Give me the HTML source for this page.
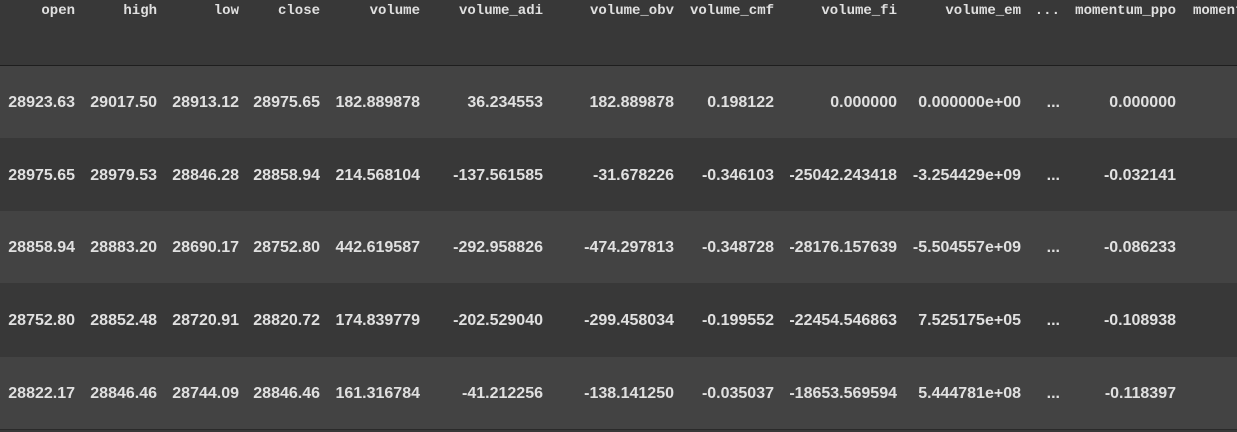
<!DOCTYPE html><html><head><style>
body{margin:0;width:1237px;height:432px;overflow:hidden;background:#383838;position:relative;color:#e0e0e0}
.h{position:absolute;top:3px;font:bold 14px "Liberation Mono",monospace;white-space:nowrap;text-align:right}
.r{position:absolute;left:0;width:1237px;height:72px}
.c{position:absolute;font:bold 16px "Liberation Sans",sans-serif;white-space:nowrap;top:28px;text-align:right}
.line{position:absolute;left:0;width:1237px;height:1px;background:#1e1e1e}
</style></head><body>
<div class="line" style="top:65px"></div>
<div id="hd"></div>
<div id="rows"></div>
<script>
var R=[75,157,239,320,420,543,674,774,897,1021,1060,1176];
var H=["open","high","low","close","volume","volume_adi","volume_obv","volume_cmf","volume_fi","volume_em","...","momentum_ppo"];
var D=[["28923.63","29017.50","28913.12","28975.65","182.889878","36.234553","182.889878","0.198122","0.000000","0.000000e+00","...","0.000000"],
["28975.65","28979.53","28846.28","28858.94","214.568104","-137.561585","-31.678226","-0.346103","-25042.243418","-3.254429e+09","...","-0.032141"],
["28858.94","28883.20","28690.17","28752.80","442.619587","-292.958826","-474.297813","-0.348728","-28176.157639","-5.504557e+09","...","-0.086233"],
["28752.80","28852.48","28720.91","28820.72","174.839779","-202.529040","-299.458034","-0.199552","-22454.546863","7.525175e+05","...","-0.108938"],
["28822.17","28846.46","28744.09","28846.46","161.316784","-41.212256","-138.141250","-0.035037","-18653.569594","5.444781e+08","...","-0.118397"]];
var s="";for(var i=0;i<H.length;i++)s+='<div class="h" style="right:'+(1237-R[i])+'px">'+H[i]+'</div>';
s+='<div class="h" style="left:1193px">momentum</div>';
document.getElementById("hd").innerHTML=s;
var T=[66,138.5,211,284,356.5],t="";
for(var j=0;j<5;j++){t+='<div class="r" style="top:'+T[j]+'px;background:'+(j%2?'#383838':'#434343')+'">';
for(var i=0;i<12;i++)t+='<div class="c" style="right:'+(1237-R[i])+'px">'+D[j][i]+'</div>';t+='</div>';}
t+='<div class="line" style="top:429px;background:#2a2a2a"></div>';
document.getElementById("rows").innerHTML=t;
</script></body></html>
